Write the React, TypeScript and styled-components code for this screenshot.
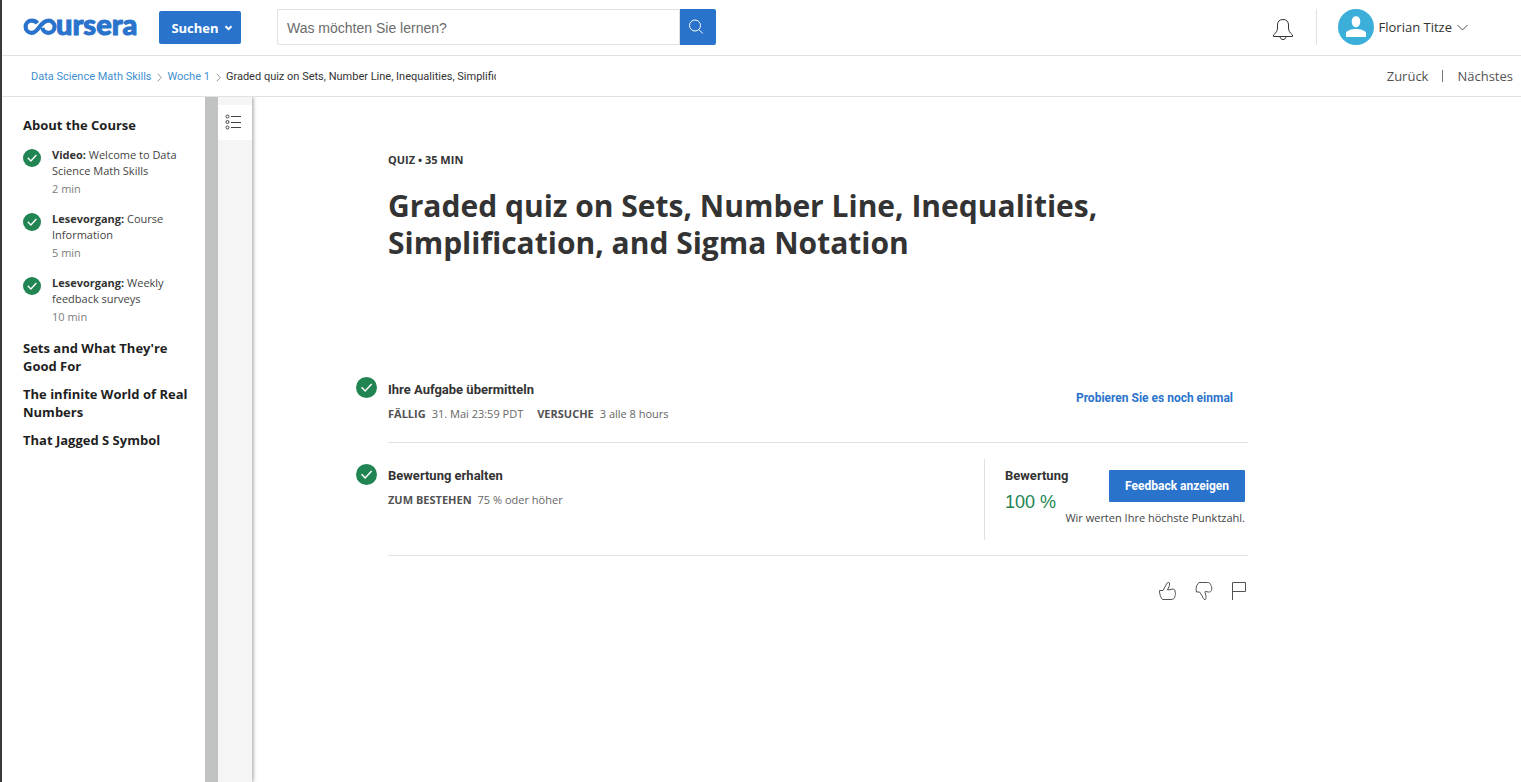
import React from 'react';
import styled, { createGlobalStyle } from 'styled-components';

const openSans = '"Open Sans", "Liberation Sans", sans-serif';
const arial = '"Liberation Sans", Arial, sans-serif';
const roboto = 'Roboto, "Liberation Sans", sans-serif';
const blue = '#2a73cc';
const green = '#208552';
const line = '#e1e1e1';
const ink = '#333';

const GlobalStyle = createGlobalStyle`
  *, *::before, *::after { box-sizing: border-box; }
  body { margin: 0; background: #fff; color: ${ink}; font-family: ${openSans}; }
  h1, h2, h3, p, ul, ol, dl, dd { margin: 0; padding: 0; }
  ul, ol { list-style: none; }
  button { border: 0; padding: 0; background: none; font: inherit; color: inherit; cursor: pointer; }
  a { color: inherit; text-decoration: none; }
  svg { display: block; flex: none; }
`;

const Page = styled.div`
  display: flex;
  flex-direction: column;
  min-height: 100vh;
  border-left: 2px solid #3a3a38;
`;

const Header = styled.header`
  display: flex;
  align-items: center;
  height: 56px;
  padding: 0 53px 1px 20px;
  border-bottom: 1px solid ${line};
`;

const BrowseButton = styled.button`
  display: flex;
  align-items: center;
  justify-content: center;
  gap: 5px;
  width: 82px;
  height: 33px;
  margin-left: 19px;
  padding: 2px 0 0 4px;
  border-radius: 2px;
  background: ${blue};
  color: #fff;
  font-size: 13px;
  font-weight: 700;
`;

const SearchForm = styled.form`
  display: flex;
  width: 439px;
  height: 36px;
  margin-left: 36px;
`;

const SearchInput = styled.input`
  flex: 1;
  min-width: 0;
  padding: 2px 9px 0;
  border: 1px solid ${line};
  border-radius: 2px 0 0 2px;
  font-family: ${arial};
  font-size: 14px;
  color: ${ink};
  &::placeholder { color: #6b6b6b; opacity: 1; }
`;

const SearchButton = styled.button`
  display: grid;
  place-items: center;
  width: 36px;
  padding-right: 4px;
  border-radius: 0 2px 2px 0;
  background: ${blue};
`;

const Account = styled.div`
  display: flex;
  align-items: center;
  margin-left: auto;
`;

const BellButton = styled.button`
  padding-top: 4px;
`;

const UserButton = styled.button`
  display: flex;
  align-items: center;
  gap: 5px;
  height: 36px;
  margin-left: 22px;
  padding-left: 21px;
  border-left: 1px solid ${line};
  font-size: 13px;
`;

const SubHeader = styled.div`
  display: flex;
  align-items: center;
  justify-content: space-between;
  height: 41px;
  padding: 0 8px 0 29px;
  border-bottom: 1px solid ${line};
`;

const Crumbs = styled.ol`
  display: flex;
  align-items: center;
  padding-top: 2px;
  font-family: ${roboto};
  font-size: 11px;
  line-height: 16px;
`;

const Crumb = styled.li`
  display: flex;
  align-items: center;
  gap: 6px;
  margin-right: 5px;
  color: #3f8fd0;
`;

const CurrentCrumb = styled.li`
  width: 270px;
  overflow: hidden;
  white-space: nowrap;
  color: ${ink};
`;

const Pager = styled.nav`
  display: flex;
  align-items: center;
  gap: 14px;
  font-size: 13px;
  color: #525252;
`;

const PagerRule = styled.span`
  width: 1px;
  height: 12px;
  background: #757575;
`;

const Body = styled.div`
  display: flex;
  flex: 1;
`;

const Sidebar = styled.nav`
  width: 203px;
  padding: 19px 14px 20px 21px;
`;

const ModuleTitle = styled.h2`
  margin-bottom: 10px;
  font-size: 13px;
  font-weight: 700;
  line-height: 18px;
  color: #1f1f1f;
`;

const LessonList = styled.ul`
  display: flex;
  flex-direction: column;
  gap: 14px;
  margin: 13px 0 14px;
`;

const Lesson = styled.a`
  display: flex;
  gap: 11px;
  font-size: 11px;
  line-height: 16px;
  color: #444;
  svg { margin-top: 2px; }
  strong { font-weight: 700; color: ${ink}; }
`;

const Duration = styled.span`
  display: block;
  margin-top: 2px;
  color: #7c7c7c;
`;

const ScrollTrack = styled.div`
  width: 13px;
  background: #c1c3c2;
`;

const Rail = styled.aside`
  width: 34px;
  padding-top: 8px;
  background: #f5f5f5;
  box-shadow: 1px 0 4px rgba(0, 0, 0, 0.4);
  clip-path: inset(0 -8px 0 0);
`;

const RailButton = styled.button`
  display: grid;
  place-items: center;
  width: 34px;
  height: 35px;
  padding: 0 4px 2px 0;
  background: #fff;
`;

const Main = styled.main`
  flex: 1;
  padding: 55px 32px 40px 104px;
`;

const Content = styled.div`
  max-width: 892px;
`;

const Intro = styled.div`
  min-height: 225px;
  padding-left: 32px;
`;

const Kicker = styled.p`
  font-size: 11px;
  font-weight: 700;
  line-height: 16px;
`;

const Title = styled.h1`
  max-width: 760px;
  margin-top: 19px;
  font-size: 30px;
  font-weight: 700;
  line-height: 37px;
`;

const Step = styled.section`
  display: flex;
  gap: 11px;
`;

const StepBody = styled.div`
  display: flex;
  justify-content: space-between;
  flex: 1;
  border-bottom: 1px solid ${line};
`;

const StepText = styled.div`
  padding: 4px 0 20px;
`;

const StepTitle = styled.h3`
  font-family: ${roboto};
  font-size: 13px;
  font-weight: 700;
  line-height: 18px;
`;

const Facts = styled.dl`
  display: flex;
  gap: 14px;
  margin-top: 7px;
  font-size: 11px;
  line-height: 16px;
  color: #666;
  div { display: flex; gap: 6px; }
  dt { font-weight: 700; color: #525252; }
`;

const RetryButton = styled.button`
  align-self: flex-start;
  margin: 12px 15px 0 0;
  font-family: ${roboto};
  font-size: 12px;
  font-weight: 700;
  line-height: 18px;
  color: ${blue};
`;

const GradeStep = styled(Step)`
  padding-top: 16px;
  > svg { margin-top: 5px; }
`;

const GradeText = styled.div`
  padding-top: 8px;
`;

const Grade = styled.div`
  display: flex;
  width: 264px;
  height: 81px;
  margin-bottom: 15px;
  padding: 8px 3px 0 20px;
  border-left: 1px solid ${line};
`;

const Score = styled.p`
  margin-top: 6px;
  font-family: ${arial};
  font-size: 18px;
  line-height: 22px;
  color: ${green};
`;

const Feedback = styled.div`
  display: flex;
  flex: 1;
  flex-direction: column;
  align-items: flex-end;
  min-width: 0;
  padding-top: 3px;
`;

const FeedbackButton = styled.button`
  width: 136px;
  height: 32px;
  flex: none;
  border-radius: 1px;
  background: ${blue};
  color: #fff;
  font-family: ${roboto};
  font-size: 12px;
  font-weight: 700;
`;

const Note = styled.p`
  margin-top: 8px;
  font-size: 11px;
  line-height: 16px;
  white-space: nowrap;
  color: #444;
`;

const Reactions = styled.div`
  display: flex;
  justify-content: flex-end;
  gap: 18px;
  padding: 25px 2px 0 0;
`;

const Logo = () => (
  <svg width="118" height="42" viewBox="0 0 118 42" aria-hidden="true">
    <path
      d="M15.400 17.200C14.200 15.700 12 14.700 9.600 14.700a6 6.100 0 0 0 0 12.200c7.200 0 8.400-12.200 17-12.200a6 6.100 0 1 1 0 12.200c-3.300 0-5.700-2.200-6.200-5"
      fill="none"
      stroke={blue}
      strokeWidth="4.200"
    />
    <text x="34" y="29" fontFamily="Lato, sans-serif" fontWeight="900" fontSize="29" fill={blue} stroke={blue} strokeWidth="1">ursera</text>
  </svg>
);

const Check = ({ size }: { size: number }) => (
  <svg width={size} height={size} viewBox="0 0 20 20" aria-hidden="true">
    <circle cx="10" cy="10" r="10" fill={green} />
    <path d="M5.300 9.800l3.400 3.500 6.200-6.600" fill="none" stroke="#fff" strokeWidth="1.500" />
  </svg>
);

const Bell = () => (
  <svg width="22" height="24" viewBox="0 0 22 24" fill="none" stroke="#333" aria-hidden="true">
    <path d="M1.500 19.500v-1.500c2.700-2.200 4-4.400 4-7V8c0-3.500 2-5.500 5.500-5.500s5.500 2 5.500 5.500v3c0 2.600 1.300 4.800 4 7v1.500zM8 19.700c.3 1.800 1.300 2.800 3 2.800s2.700-1 3-2.800" />
  </svg>
);

const Avatar = () => (
  <svg width="36" height="36" viewBox="0 0 36 36" aria-hidden="true">
    <circle cx="18" cy="18" r="18" fill="#3bafda" />
    <path d="M13.700 12.500c0-3.300 1.600-5.300 4.300-5.300s4.300 2 4.300 5.300-1.900 5.800-4.300 5.800-4.300-2.500-4.300-5.800zM8 28v-4.200c0-2.200 6.500-3.800 10-3.800s10 1.600 10 3.800V28z" fill="#fff" />
  </svg>
);

const Chevron = ({ w, h, d, color, weight = 1 }: { w: number; h: number; d: string; color: string; weight?: number }) => (
  <svg width={w} height={h} viewBox={`0 0 ${w} ${h}`} fill="none" stroke={color} strokeWidth={weight} aria-hidden="true">
    <path d={d} />
  </svg>
);

const lessons = [
  { kind: 'Video', name: 'Welcome to Data Science Math Skills', time: '2 min' },
  { kind: 'Lesevorgang', name: 'Course Information', time: '5 min' },
  { kind: 'Lesevorgang', name: 'Weekly feedback surveys', time: '10 min' },
];

const modules = ["Sets and What They're Good For", 'The infinite World of Real Numbers', 'That Jagged S Symbol'];

export default function App() {
  return (
    <Page>
      <GlobalStyle />
      <Header>
        <a href="#home" aria-label="coursera"><Logo /></a>
        <BrowseButton type="button">
          Suchen
          <Chevron w={9} h={6} d="M1.500 1.200l3 3 3-3" color="#fff" weight={2} />
        </BrowseButton>
        <SearchForm role="search">
          <SearchInput type="search" placeholder="Was möchten Sie lernen?" aria-label="Was möchten Sie lernen?" />
          <SearchButton type="button" aria-label="Suchen">
            <svg width="16" height="16" viewBox="0 0 16 16" fill="none" stroke="#fff" aria-hidden="true">
              <circle cx="7" cy="6.500" r="5.500" />
              <path d="M10.800 10.500l4 4" />
            </svg>
          </SearchButton>
        </SearchForm>
        <Account>
          <BellButton type="button" aria-label="Benachrichtigungen"><Bell /></BellButton>
          <UserButton type="button">
            <Avatar />
            Florian Titze
            <Chevron w={11} h={7} d="M.500 1l5 5 5-5" color="#525252" />
          </UserButton>
        </Account>
      </Header>

      <SubHeader>
        <Crumbs>
          <Crumb><a href="#course">Data Science Math Skills</a><Chevron w={5} h={9} d="M.700 .700l3.600 3.800-3.600 3.800" color="#999" /></Crumb>
          <Crumb><a href="#week">Woche 1</a><Chevron w={5} h={9} d="M.700 .700l3.600 3.800-3.600 3.800" color="#999" /></Crumb>
          <CurrentCrumb>Graded quiz on Sets, Number Line, Inequalities, Simplification, and Sigma Notation</CurrentCrumb>
        </Crumbs>
        <Pager>
          <a href="#previous">Zurück</a>
          <PagerRule />
          <a href="#next">Nächstes</a>
        </Pager>
      </SubHeader>

      <Body>
        <Sidebar>
          <ModuleTitle>About the Course</ModuleTitle>
          <LessonList>
            {lessons.map(l => (
              <li key={l.name}>
                <Lesson href="#lesson">
                  <Check size={18} />
                  <span>
                    <strong>{l.kind}:</strong> {l.name}
                    <Duration>{l.time}</Duration>
                  </span>
                </Lesson>
              </li>
            ))}
          </LessonList>
          {modules.map(m => <ModuleTitle key={m}>{m}</ModuleTitle>)}
        </Sidebar>
        <ScrollTrack />
        <Rail>
          <RailButton type="button" aria-label="Inhalt">
            <svg width="16" height="16" viewBox="0 0 16 16" fill="none" stroke="#444" aria-hidden="true">
              <circle cx="2.500" cy="2.500" r="1.500" />
              <circle cx="2.500" cy="8" r="1.500" />
              <circle cx="2.500" cy="13.500" r="1.500" />
              <path d="M6 2.500h10M6 8.500h10M6 13.500h10" />
            </svg>
          </RailButton>
        </Rail>

        <Main>
          <Content>
            <Intro>
              <Kicker>QUIZ • 35 MIN</Kicker>
              <Title>Graded quiz on Sets, Number Line, Inequalities, Simplification, and Sigma Notation</Title>
            </Intro>
            <Step>
              <Check size={21} />
              <StepBody>
                <StepText>
                  <StepTitle>Ihre Aufgabe übermitteln</StepTitle>
                  <Facts>
                    <div><dt>FÄLLIG</dt><dd>31. Mai 23:59 PDT</dd></div>
                    <div><dt>VERSUCHE</dt><dd>3 alle 8 hours</dd></div>
                  </Facts>
                </StepText>
                <RetryButton type="button">Probieren Sie es noch einmal</RetryButton>
              </StepBody>
            </Step>
            <GradeStep>
              <Check size={21} />
              <StepBody>
                <GradeText>
                  <StepTitle>Bewertung erhalten</StepTitle>
                  <Facts>
                    <div><dt>ZUM BESTEHEN</dt><dd>75 % oder höher</dd></div>
                  </Facts>
                </GradeText>
                <Grade>
                  <div>
                    <StepTitle>Bewertung</StepTitle>
                    <Score>100 %</Score>
                  </div>
                  <Feedback>
                    <FeedbackButton type="button">Feedback anzeigen</FeedbackButton>
                    <Note>Wir werten Ihre höchste Punktzahl.</Note>
                  </Feedback>
                </Grade>
              </StepBody>
            </GradeStep>
            <Reactions>
              <button type="button" aria-label="Gefällt mir">
                <svg width="19" height="20" viewBox="0 0 19 20" fill="none" stroke="#525252" aria-hidden="true">
                  <path d="M4.500 18.500C2.500 16.500 1.500 13 1.500 9.500H5L8.500 3C9 1.500 10.500 1 11.500 2v2.500L9.500 9h.500L15 8c1.500.2 2.500 1.500 2 3 .8 1.200.8 2.500 0 3.500 0 2.500-1.500 4-4 4z" />
                </svg>
              </button>
              <button type="button" aria-label="Gefällt mir nicht">
                <svg width="18" height="20" viewBox="0 0 18 20" fill="none" stroke="#525252" aria-hidden="true">
                  <path d="M1.500 11C.8 8 1 5 3 2.500c.5-.7 1-1 2-1h7.500c2 0 3 1.200 3.500 3 1 1.500 1 3.500.5 5-.6 1.200-1.700 1.700-3 1.500l-3.300-.5-.2.800 1 4c0 1.700-.2 3.200-1 3.500-1.500-.5-2.300-2.200-3-4.300L4.500 11z" />
                </svg>
              </button>
              <button type="button" aria-label="Melden">
                <svg width="15" height="20" viewBox="0 0 15 20" fill="none" stroke="#525252" aria-hidden="true">
                  <path d="M1.500 19V1.500h13v9h-13" />
                </svg>
              </button>
            </Reactions>
          </Content>
        </Main>
      </Body>
    </Page>
  );
}
